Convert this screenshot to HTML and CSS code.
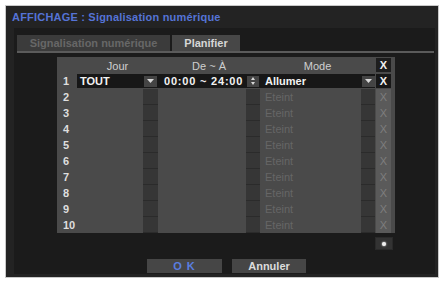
FILE: index.html
```html
<!DOCTYPE html>
<html lang="fr">
<head>
<meta charset="utf-8">
<title>AFFICHAGE : Signalisation numérique</title>
<link rel="stylesheet" href="styles.css">
</head>
<body>
<div class="dialog">
  <div class="titlebar"><span class="title">AFFICHAGE : Signalisation numérique</span></div>
  <div class="content">
    <div class="tabs">
      <div class="tab tab-off">Signalisation numérique</div>
      <div class="tab tab-on">Planifier</div>
    </div>
    <div class="tabline"></div>
    <div class="sched">
      <div class="row head">
        <div></div>
        <div class="h-jour">Jour</div>
        <div class="h-de">De ~ À</div>
        <div class="h-mode">Mode</div>
        <div class="x-head">X</div>
        <div></div>
      </div>
      <div class="row sel">
        <div class="num">1</div>
        <div class="cell jour">TOUT</div>
        <div class="cellbtn"><span class="btn"><svg width="7" height="4" viewBox="0 0 7 4"><path d="M0 0h7L3.5 4z" fill="#d8d8d8"/></svg></span></div>
        <div class="cell time">00:00 ~ 24:00</div>
        <div class="cellbtn"><span class="btn spin"><svg width="4" height="8" viewBox="0 0 4 8"><path d="M2 0L4 3H0z M2 8L4 5H0z" fill="#d8d8d8"/></svg></span></div>
        <div class="cell mode">Allumer</div>
        <div class="cellbtn"><span class="btn"><svg width="7" height="4" viewBox="0 0 7 4"><path d="M0 0h7L3.5 4z" fill="#d8d8d8"/></svg></span></div>
        <div class="cell xsel">X</div>
        <div></div>
      </div>
      <div class="row"><div class="num">2</div><div></div><div class="dk"></div><div></div><div class="dk"></div><div class="off">Eteint</div><div class="dk"></div><div class="xoff">X</div><div></div></div>
      <div class="row"><div class="num">3</div><div></div><div class="dk"></div><div></div><div class="dk"></div><div class="off">Eteint</div><div class="dk"></div><div class="xoff">X</div><div></div></div>
      <div class="row"><div class="num">4</div><div></div><div class="dk"></div><div></div><div class="dk"></div><div class="off">Eteint</div><div class="dk"></div><div class="xoff">X</div><div></div></div>
      <div class="row"><div class="num">5</div><div></div><div class="dk"></div><div></div><div class="dk"></div><div class="off">Eteint</div><div class="dk"></div><div class="xoff">X</div><div></div></div>
      <div class="row"><div class="num">6</div><div></div><div class="dk"></div><div></div><div class="dk"></div><div class="off">Eteint</div><div class="dk"></div><div class="xoff">X</div><div></div></div>
      <div class="row"><div class="num">7</div><div></div><div class="dk"></div><div></div><div class="dk"></div><div class="off">Eteint</div><div class="dk"></div><div class="xoff">X</div><div></div></div>
      <div class="row"><div class="num">8</div><div></div><div class="dk"></div><div></div><div class="dk"></div><div class="off">Eteint</div><div class="dk"></div><div class="xoff">X</div><div></div></div>
      <div class="row"><div class="num">9</div><div></div><div class="dk"></div><div></div><div class="dk"></div><div class="off">Eteint</div><div class="dk"></div><div class="xoff">X</div><div></div></div>
      <div class="row"><div class="num">10</div><div></div><div class="dk"></div><div></div><div class="dk"></div><div class="off">Eteint</div><div class="dk"></div><div class="xoff">X</div><div></div></div>
    </div>
    <div class="plus"><span class="plusdot"></span></div>
    <div class="actions">
      <button class="act ok">O K</button>
      <button class="act cancel">Annuler</button>
    </div>
  </div>
</div>
</body>
</html>
```

FILE: styles.css
```css
html, body { margin: 0; padding: 0; }
body {
  background: #ffffff;
  font-family: "Liberation Sans", Arial, sans-serif;
  font-size: 11px;
}
.dialog {
  margin: 5px 0 0 5px;
  width: 434px;
  height: 273px;
  box-sizing: border-box;
  border: 1px solid #c9c9c9;
  background: #232323;
  display: flex;
  flex-direction: column;
}
.titlebar {
  height: 22px;
  padding-left: 6px;
  display: flex;
  align-items: center;
}
.title {
  color: #5573d6;
  font-weight: bold;
  font-size: 11px;
  letter-spacing: 0.2px;
}
.content {
  flex: 1;
  margin: 0 3px 3px 8px;
  padding-left: 3px;
  background: #1b1b1b;
  display: flex;
  flex-direction: column;
}
.tabs {
  display: flex;
  gap: 2px;
  margin-top: 7px;
}
.tab {
  height: 16px;
  display: flex;
  align-items: center;
  justify-content: center;
  font-weight: bold;
  font-size: 11px;
}
.tab-off {
  width: 153px;
  background: #3b3b3b;
  color: #676767;
}
.tab-on {
  width: 68px;
  background: #474747;
  color: #d6d6d6;
}
.tabline {
  height: 2px;
  background: #5b5b5b;
  margin-right: 1px;
}
.sched {
  margin: 4px 0 0 40px;
  width: 338px;
  background: #4a4a4a;
}
.row {
  display: grid;
  grid-template-columns: 20px 66px 15px 88px 14px 101px 14px 16px 4px;
  height: 16px;
  align-items: stretch;
}
.row > div {
  display: flex;
  align-items: center;
}
.head > div { color: #cfcfcf; justify-content: center; padding-top: 2px; }
.h-jour { grid-column: 2 / 4; }
.h-de { grid-column: 4 / 6; }
.h-mode { grid-column: 6 / 8; }
.head .x-head {
  margin: 1px 0 1px 1px;
  padding-top: 0;
  background: #1e1e1e;
  color: #f0f0f0;
  font-weight: bold;
}
.num {
  color: #dedede;
  font-weight: bold;
  padding-left: 6px;
}
.sel .cell {
  background: #171717;
  color: #f2f2f2;
  font-weight: bold;
  margin: 1px 0;
}
.sel .jour { padding-left: 3px; }
.sel .time { padding-left: 6px; letter-spacing: 0.8px; }
.sel .mode { padding-left: 5px; }
.sel .xsel { justify-content: center; margin-left: 1px; }
.sel .cellbtn {
  background: #171717;
  margin: 1px 0;
  justify-content: center;
}
.btn {
  width: 13px;
  height: 11px;
  background: #444444;
  display: flex;
  align-items: center;
  justify-content: center;
}
.btn.spin { width: 12px; }
.dk {
  background: #363636;
  border-bottom: 1px solid #2b2b2b;
}
.off {
  color: #666666;
  padding-left: 5px;
}
.xoff {
  background: #5a5a5a;
  color: #7e7e7e;
  justify-content: center;
  margin-left: 1px;
}
.plus {
  margin: 4px 0 0 358px;
  width: 18px;
  height: 13px;
  box-sizing: border-box;
  background: #333333;
  border: 1px solid #2a2a2a;
  display: flex;
  align-items: center;
  justify-content: center;
}
.plusdot {
  width: 4px;
  height: 4px;
  border-radius: 50%;
  background: #f0f0f0;
  box-shadow: 0 0 2px #ffffff;
}
.actions {
  display: flex;
  gap: 10px;
  margin: 9px 0 0 130px;
}
.act {
  height: 14px;
  border: 0;
  padding: 0;
  background: #464646;
  font-family: "Liberation Sans", Arial, sans-serif;
  font-size: 11px;
  font-weight: bold;
  display: flex;
  align-items: center;
  justify-content: center;
}
.ok { width: 75px; color: #5a7ee0; letter-spacing: 1px; }
.cancel { width: 74px; color: #dcdcdc; }
```
